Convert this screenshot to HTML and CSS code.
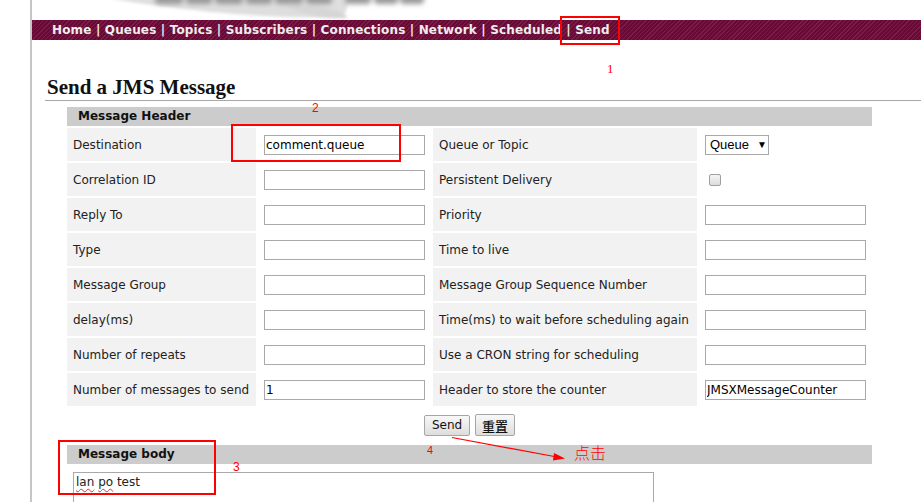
FILE: index.html
```html
<!DOCTYPE html>
<html lang="en">
<head>
<meta charset="utf-8">
<title>Send a JMS Message</title>
<link rel="stylesheet" href="styles.css">
</head>
<body>
<div class="page">
  <div class="banner">
    <svg class="logo" width="340" height="20" viewBox="0 0 340 20" aria-hidden="true">
      <defs>
        <filter id="b1" x="-20%" y="-100%" width="140%" height="300%"><feGaussianBlur stdDeviation="1.5"/></filter>
        <filter id="b2" x="-20%" y="-200%" width="140%" height="500%"><feGaussianBlur stdDeviation="2.6"/></filter>
      </defs>
      <path d="M10 -2 L250 -2 L244 16 C200 20 120 14 60 6 C40 3 20 1 10 -2 Z" fill="#dedede" filter="url(#b1)"/>
      <path d="M185 6 C210 4 240 8 248 18 C225 19 200 14 185 6 Z" fill="#d6d6d6" filter="url(#b1)"/>
      <g fill="#9a9a9a" filter="url(#b2)">
        <rect x="55" y="-8" width="28" height="12" rx="4"/>
        <rect x="86" y="-8" width="26" height="12" rx="4"/>
        <rect x="115" y="-8" width="28" height="12" rx="4"/>
        <rect x="146" y="-8" width="26" height="12" rx="4"/>
        <rect x="175" y="-8" width="28" height="12" rx="4"/>
        <rect x="206" y="-8" width="26" height="12" rx="4"/>
        <rect x="245" y="-8" width="26" height="12" rx="4"/>
        <rect x="274" y="-8" width="24" height="12" rx="4"/>
        <rect x="300" y="-8" width="24" height="12" rx="4"/>
      </g>
    </svg>
  </div>
  <nav class="nav">
    <a href="#">Home</a> | <a href="#">Queues</a> | <a href="#">Topics</a> | <a href="#">Subscribers</a> | <a href="#">Connections</a> | <a href="#">Network</a> | <a href="#">Scheduled</a> | <a href="#">Send</a>
  </nav>
  <main class="content">
    <h2 class="title">Send a JMS Message</h2>
    <form class="send-form">
      <table class="form-table">
        <colgroup>
          <col class="c-label1">
          <col class="c-field">
          <col class="c-label2">
          <col class="c-field">
        </colgroup>
        <tr><th class="section" colspan="4">Message Header</th></tr>
        <tr>
          <td class="label">Destination</td>
          <td class="field"><input class="text" type="text" value="comment.queue"></td>
          <td class="label">Queue or Topic</td>
          <td class="field"><span class="select-box">Queue<span class="caret">▼</span></span></td>
        </tr>
        <tr>
          <td class="label">Correlation ID</td>
          <td class="field"><input class="text" type="text"></td>
          <td class="label">Persistent Delivery</td>
          <td class="field"><input class="check" type="checkbox"></td>
        </tr>
        <tr>
          <td class="label">Reply To</td>
          <td class="field"><input class="text" type="text"></td>
          <td class="label">Priority</td>
          <td class="field"><input class="text" type="text"></td>
        </tr>
        <tr>
          <td class="label">Type</td>
          <td class="field"><input class="text" type="text"></td>
          <td class="label">Time to live</td>
          <td class="field"><input class="text" type="text"></td>
        </tr>
        <tr>
          <td class="label">Message Group</td>
          <td class="field"><input class="text" type="text"></td>
          <td class="label">Message Group Sequence Number</td>
          <td class="field"><input class="text" type="text"></td>
        </tr>
        <tr>
          <td class="label">delay(ms)</td>
          <td class="field"><input class="text" type="text"></td>
          <td class="label">Time(ms) to wait before scheduling again</td>
          <td class="field"><input class="text" type="text"></td>
        </tr>
        <tr>
          <td class="label">Number of repeats</td>
          <td class="field"><input class="text" type="text"></td>
          <td class="label">Use a CRON string for scheduling</td>
          <td class="field"><input class="text" type="text"></td>
        </tr>
        <tr>
          <td class="label">Number of messages to send</td>
          <td class="field"><input class="text" type="text" value="1"></td>
          <td class="label">Header to store the counter</td>
          <td class="field"><input class="text" type="text" value="JMSXMessageCounter"></td>
        </tr>
      </table>
      <div class="buttons">
        <button class="btn" type="button">Send</button>
        <button class="btn btn-cjk" type="button">重置</button>
      </div>
      <table class="form-table">
        <tr><th class="section">Message body</th></tr>
        <tr><td class="body-cell"><div class="textarea"><span class="typo">lan</span> <span class="typo">po</span> test</div></td></tr>
      </table>
    </form>
  </main>
</div>

<div class="mark mark-1"></div>
<div class="mark mark-2"></div>
<div class="mark mark-3"></div>
<span class="num num-1">1</span>
<span class="num num-2">2</span>
<span class="num num-3">3</span>
<span class="num num-4">4</span>
<svg class="arrow" width="130" height="30" viewBox="0 0 130 30" aria-hidden="true">
  <path d="M1 1.5 L106 21" stroke="#ff0000" stroke-width="1.2" fill="none"/>
  <path d="M103 17 L114 22.5 L102 24.5 Z" fill="#ff0000"/>
</svg>
<span class="click-note">点击</span>
</body>
</html>
```

FILE: styles.css
```css
html, body {
  margin: 0;
  padding: 0;
  background: #ffffff;
  overflow: hidden;
}

body {
  position: relative;
  width: 921px;
  height: 502px;
  font-family: "DejaVu Sans", Verdana, sans-serif;
  font-size: 12px;
  color: #222222;
}

.page {
  margin-left: 30px;
  border-left: 2px solid #c6c6c6;
  min-height: 502px;
}

.banner {
  height: 20px;
  padding-left: 68px;
  overflow: hidden;
}

.logo {
  display: block;
}

.nav {
  height: 20px;
  line-height: 20px;
  padding-left: 20px;
  background: repeating-linear-gradient(135deg, #690a36 0, #690a36 2px, #7a1d47 2px, #7a1d47 3px);
  color: #f0ecee;
  font-weight: bold;
  font-size: 12px;
  letter-spacing: 0.16px;
  white-space: nowrap;
}

.nav a {
  color: #f0ecee;
  text-decoration: none;
}

.content {
  margin-left: 13px;
}

.title {
  margin: 35px 0 0 0;
  padding: 0 0 1px 2px;
  line-height: 24px;
  height: 24px;
  font-family: "Liberation Serif", "Times New Roman", serif;
  font-size: 21px;
  font-weight: bold;
  color: #111111;
  border-bottom: 1px solid #a8a8a8;
}

.send-form {
  margin: 4px 0 0 20px;
  width: 809px;
}

.form-table {
  width: 809px;
  border-collapse: separate;
  border-spacing: 2px;
  table-layout: fixed;
}

.c-label1 { width: 189px; }
.c-field { width: 173px; }
.c-label2 { width: 264px; }

.form-table td, .form-table th {
  box-sizing: border-box;
  padding: 0;
}

.section {
  height: 19px;
  line-height: 19px;
  background: #cccccc;
  text-align: left;
  padding-left: 11px !important;
  font-weight: bold;
  font-size: 12px;
  color: #111111;
}

.label {
  height: 33px;
  background: #f2f2f2;
  padding-left: 6px !important;
  white-space: nowrap;
}

.field {
  padding: 0 6px !important;
}

.text {
  display: block;
  box-sizing: border-box;
  width: 161px;
  height: 20px;
  margin: 0;
  padding: 0 1px;
  border: 1px solid #a9a9a9;
  background: #ffffff;
  font-family: "DejaVu Sans", Verdana, sans-serif;
  font-size: 12px;
  color: #000000;
  outline: none;
}

.select-box {
  display: flex;
  align-items: center;
  box-sizing: border-box;
  width: 64px;
  height: 20px;
  padding-left: 4px;
  border: 1px solid #a9a9a9;
  background: #ffffff;
  font-family: "Liberation Sans", Arial, sans-serif;
  font-size: 13px;
  color: #000000;
}

.caret {
  margin-left: 8px;
  font-size: 10px;
}

.check {
  appearance: none;
  -webkit-appearance: none;
  display: block;
  box-sizing: border-box;
  width: 12px;
  height: 12px;
  margin: 0 0 0 4px;
  border: 1px solid #a0a0a0;
  border-radius: 2px;
  background: linear-gradient(#f4f4f4, #dcdcdc);
}

.buttons {
  display: flex;
  justify-content: center;
  align-items: center;
  gap: 5px;
  margin: 6px 0 7px 0;
}

.btn {
  box-sizing: border-box;
  height: 21px;
  padding: 0 7px;
  border: 1px solid #a6a6a6;
  border-radius: 2px;
  background: linear-gradient(#f8f8f8, #dddddd);
  font-family: "DejaVu Sans", Verdana, sans-serif;
  font-size: 12px;
  color: #111111;
}

.btn-cjk {
  height: 22px;
  padding: 0 6px;
  font-family: "Noto Sans CJK SC", sans-serif;
  font-size: 13px;
  font-weight: 500;
}

.body-cell {
  padding: 6px 6px 0 6px !important;
}

.textarea {
  box-sizing: border-box;
  width: 581px;
  height: 60px;
  border: 1px solid #a9a9a9;
  padding: 2px 2px;
  font-size: 12px;
  color: #222222;
}

.typo {
  text-decoration: underline wavy #e03030;
  text-decoration-thickness: 1px;
  text-underline-offset: 2px;
}

/* annotations */
.mark {
  position: absolute;
  border: 2px solid #ff0000;
  box-sizing: border-box;
}

.mark-1 { left: 560px; top: 16px; width: 60px; height: 29px; }
.mark-2 { left: 231px; top: 124px; width: 170px; height: 38px; }
.mark-3 { left: 58px; top: 440px; width: 158px; height: 55px; }

.num {
  position: absolute;
  color: #ff0000;
  font-family: "Liberation Sans", Arial, sans-serif;
  font-size: 12px;
  line-height: 12px;
}

.num-1 { left: 607px; top: 63px; font-family: "Liberation Serif", serif; font-size: 13px; }
.num-2 { left: 312px; top: 102px; }
.num-3 { left: 233px; top: 461px; }
.num-4 { left: 427px; top: 444px; font-size: 11px; }

.arrow {
  position: absolute;
  left: 451px;
  top: 436px;
}

.click-note {
  position: absolute;
  left: 574px;
  top: 441px;
  color: #ff0000;
  font-family: "Noto Sans CJK SC", sans-serif;
  font-size: 16px;
  font-weight: 300;
  line-height: 22px;
}
```
